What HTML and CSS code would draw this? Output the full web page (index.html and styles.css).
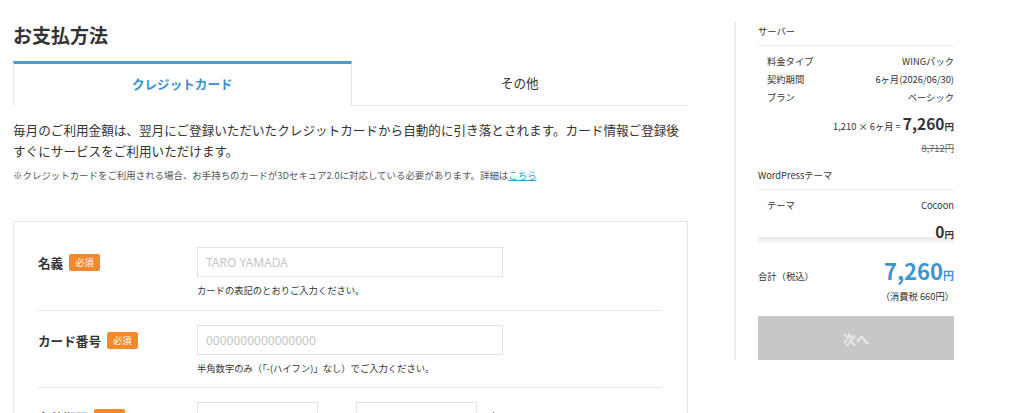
FILE: index.html
```html
<!DOCTYPE html>
<html lang="ja">
<head>
<meta charset="utf-8">
<title>お支払方法</title>
<link rel="stylesheet" href="styles.css">
</head>
<body>
<div class="page">
  <main class="main">
    <h1 class="title">お支払方法</h1>
    <div class="tabs">
      <div class="tab tab-active">クレジットカード</div>
      <div class="tab">その他</div>
    </div>
    <p class="lead">毎月のご利用金額は、翌月にご登録いただいたクレジットカードから自動的に引き落とされます。カード情報ご登録後すぐにサービスをご利用いただけます。</p>
    <p class="note">※クレジットカードをご利用される場合、お手持ちのカードが3Dセキュア2.0に対応している必要があります。詳細は<a class="link" href="#">こちら</a></p>

    <div class="card">
      <div class="row">
        <div class="label">名義<span class="badge">必須</span></div>
        <div class="field">
          <div class="input placeholder">TARO YAMADA</div>
          <div class="help">カードの表記のとおりご入力ください。</div>
        </div>
      </div>
      <div class="row">
        <div class="label">カード番号<span class="badge">必須</span></div>
        <div class="field">
          <div class="input placeholder">0000000000000000</div>
          <div class="help">半角数字のみ（「-(ハイフン)」なし）でご入力ください。</div>
        </div>
      </div>
      <div class="row">
        <div class="label">有効期限<span class="badge">必須</span></div>
        <div class="field">
          <div class="selects">
            <div class="select">01</div><span class="unit">月</span>
            <div class="select">26</div><span class="unit">年</span>
          </div>
        </div>
      </div>
    </div>
  </main>

  <aside class="side">
    <div class="sec-head">サーバー</div>
    <div class="sec-rows">
      <div class="kv"><span>料金タイプ</span><span>WINGパック</span></div>
      <div class="kv"><span>契約期間</span><span>6ヶ月(2026/06/30)</span></div>
      <div class="kv"><span>プラン</span><span>ベーシック</span></div>
    </div>
    <div class="calc">1,210 × 6ヶ月 = <b class="calc-num">7,260</b><b class="yen">円</b></div>
    <div class="strike">8,712円</div>

    <div class="sec-head sec-head-2">WordPressテーマ</div>
    <div class="sec-rows">
      <div class="kv"><span>テーマ</span><span>Cocoon</span></div>
    </div>
    <div class="zero"><b class="zero-num">0</b><b class="yen">円</b></div>
    <div class="strip"></div>

    <div class="total">
      <span class="total-label">合計（税込）</span>
      <span class="total-price"><b class="total-num">7,260</b><b class="total-yen">円</b></span>
    </div>
    <div class="tax">（消費税 660円）</div>
    <button class="next" type="button">次へ</button>
  </aside>
</div>
</body>
</html>
```

FILE: styles.css
```css
* { box-sizing: border-box; }
html, body { margin: 0; padding: 0; background: #fff; }
body {
  font-family: "Noto Sans CJK JP", "Noto Sans", sans-serif;
  color: #333;
  width: 1024px;
  height: 413px;
  overflow: hidden;
}
.page {
  display: flex;
  align-items: flex-start;
}
.main {
  width: 675px;
  margin-left: 13px;
}
.title {
  margin: 21px 0 0;
  font-size: 19px;
  line-height: 28px;
  font-weight: 700;
  color: #333;
}
.tabs {
  display: flex;
  margin-top: 12px;
  height: 45px;
}
.tab {
  flex: 1;
  display: flex;
  align-items: center;
  justify-content: center;
  font-size: 12.6px;
  color: #333;
  border-bottom: 1px solid #e6e6e6;
  padding-bottom: 2px;
}
.tab-active {
  border: 1px solid #e6e6e6;
  border-top: 3px solid #4a9bd7;
  border-bottom: none;
  padding-bottom: 4px;
  color: #3d8fcf;
  font-weight: 700;
}
.lead {
  margin: 13px 0 0;
  font-size: 12.6px;
  line-height: 21px;
  color: #333;
}
.note {
  margin: 7px 0 0;
  font-size: 9.45px;
  line-height: 14px;
  color: #555;
}
.link { color: #2aa0d8; text-decoration: underline; }
.card {
  margin-top: 39px;
  border: 1px solid #e6e6e6;
  padding: 11px 25px 0 24px;
}
.row {
  display: flex;
  padding: 14px 0 12px;
  border-bottom: 1px solid #e8e8e8;
}
.label {
  width: 159px;
  height: 30px;
  display: flex;
  align-items: center;
  font-size: 12.6px;
  font-weight: 700;
  color: #333;
}
.badge {
  margin-left: 6px;
  background: #f3892b;
  color: #fff;
  font-size: 9.3px;
  font-weight: 400;
  line-height: 17px;
  height: 17px;
  padding: 0 6px;
  border-radius: 2px;
}
.field { flex: 1; }
.input {
  width: 306px;
  height: 30px;
  border: 1px solid #e2e2e2;
  padding: 0 8px;
  display: flex;
  align-items: center;
  font-family: "Noto Sans", sans-serif;
  font-size: 12px;
}
.placeholder { color: #c6c6c6; }
.help {
  margin-top: 6px;
  font-size: 9.3px;
  line-height: 14px;
  color: #333;
}
.row:first-child .help { margin-bottom: 1px; }
.selects {
  display: flex;
  align-items: center;
}
.select {
  width: 121px;
  height: 30px;
  border: 1px solid #e2e2e2;
  padding: 0 8px;
  display: flex;
  align-items: center;
  font-size: 12px;
  color: #333;
}
.unit {
  width: 38px;
  text-align: center;
  font-size: 12.6px;
}

.side {
  margin-left: 46px;
  margin-top: 22px;
  border-left: 2px solid #ececec;
  padding-left: 22px;
  width: 220px;
}
.side > * { width: 196px; }
.sec-head {
  font-size: 9.3px;
  line-height: 18px;
  padding-bottom: 5px;
  border-bottom: 1px solid #eeeeee;
  color: #333;
}
.sec-head-2 { margin-top: 10px; }
.sec-rows { padding: 6px 0 0 9px; }
.kv {
  display: flex;
  justify-content: space-between;
  font-size: 9.3px;
  line-height: 18px;
  color: #333;
}
.calc {
  margin-top: 6px;
  text-align: right;
  font-size: 9.3px;
  line-height: 22px;
  color: #333;
}
.calc-num { font-size: 15.5px; font-weight: 700; }
.yen { font-size: 9.5px; font-weight: 700; }
.strike {
  margin-top: 3px;
  text-align: right;
  font-size: 9.3px;
  line-height: 16px;
  color: #666;
  text-decoration: line-through;
}
.zero {
  margin-top: 9px;
  text-align: right;
  line-height: 16px;
  height: 14px;
}
.zero-num { font-size: 15.5px; font-weight: 700; }
.strip {
  height: 6px;
  background: linear-gradient(#e9e9e9, #f7f7f7);
}
.total {
  margin-top: 13px;
  display: flex;
  justify-content: space-between;
  align-items: baseline;
}
.total-label { font-size: 9.3px; color: #333; }
.total-price { line-height: 28px; color: #3b95d5; }
.total-num { font-size: 22px; font-weight: 700; }
.total-yen { font-size: 11px; font-weight: 700; }
.tax {
  text-align: right;
  font-size: 9.3px;
  line-height: 14px;
  color: #333;
}
.next {
  display: block;
  margin-top: 13px;
  height: 44px;
  border: none;
  background: #c7c7c7;
  color: #e9e9e9;
  font-family: "Noto Sans CJK JP", sans-serif;
  font-size: 13px;
  font-weight: 700;
  padding: 0;
}
```
